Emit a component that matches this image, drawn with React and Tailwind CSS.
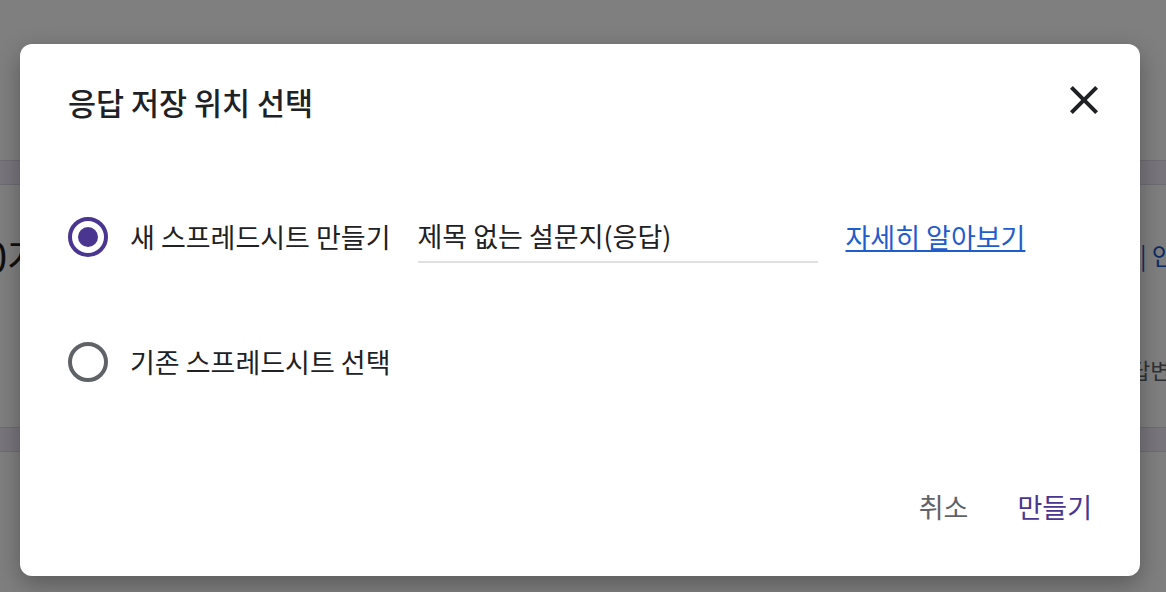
import { useState } from "react"

const CloseIcon = () => (
  <svg viewBox="0 0 24 24" className="h-12 w-12" fill="#202124">
    <path d="M19 6.41L17.59 5 12 10.59 6.41 5 5 6.41 10.59 12 5 17.59 6.41 19 12 13.41 17.59 19 19 17.59 13.41 12z" />
  </svg>
)

const Radio = ({ checked, label, onClick }) => (
  <button type="button" onClick={onClick} className="flex items-center gap-[22px] text-left">
    <span
      className={`flex h-10 w-10 shrink-0 items-center justify-center rounded-full border-4 ${
        checked ? "border-[#4a3590]" : "border-[#5f6368]"
      }`}
    >
      {checked && <span className="h-[20px] w-[20px] rounded-full bg-[#4a3590]"></span>}
    </span>
    <span className="whitespace-nowrap text-[27px] leading-9 text-[#202124]">{label}</span>
  </button>
)

const App = () => {
  const [choice, setChoice] = useState("new")
  const [title, setTitle] = useState("제목 없는 설문지(응답)")

  return (
    <div className="relative h-[592px] w-[1166px] overflow-hidden bg-white font-['Noto_Sans_CJK_KR','Noto_Sans',sans-serif]">
      {/* page behind the dialog */}
      <div className="flex flex-col">
        <div className="h-[160px] bg-white"></div>
        <div className="h-[25px] border-y border-[#dcd6e6] bg-[#f0ebf8]"></div>
        <div className="flex h-[242px] flex-col">
          <div className="mt-[46px] grid grid-cols-[1140px_1fr] items-center whitespace-nowrap">
            <span className="-ml-[15px] text-[40px] leading-[48px] text-[#202124]">0개</span>
            <span className="text-[24px] leading-8 text-[#1a56c8]">| 인쇄</span>
          </div>
          <div className="mt-[74px] grid grid-cols-[1130px_1fr] whitespace-nowrap">
            <span></span>
            <span className="text-[22px] leading-8 text-[#5f6368]">답변을</span>
          </div>
        </div>
        <div className="h-[25px] border-y border-[#dcd6e6] bg-[#f0ebf8]"></div>
        <div className="h-[140px] bg-white"></div>
      </div>

      {/* overlay + dialog */}
      <div className="absolute inset-0 bg-black/50 px-[20px] pt-[44px]">
        <div className="flex h-[532px] w-[1120px] flex-col rounded-[12px] bg-white shadow-[0_8px_24px_rgba(0,0,0,0.3)]">
          <div className="mt-[32px] flex h-12 items-center justify-between pl-12 pr-8">
            <h2 className="mt-[4px] text-[30.5px] font-medium leading-10 text-[#202124]">응답 저장 위치 선택</h2>
            <button type="button" className="flex h-12 w-12 items-center justify-center">
              <CloseIcon />
            </button>
          </div>

          <div className="mt-[87px] flex flex-col pl-12">
            <div className="flex items-center">
              <Radio checked={choice === "new"} label="새 스프레드시트 만들기" onClick={() => setChoice("new")} />
              <div className="ml-[27px] flex h-[52px] w-[400px] items-center border-b-2 border-[#e0e0e0]">
                <input
                  value={title}
                  onChange={(e) => setTitle(e.target.value)}
                  className="w-full bg-transparent text-[27px] leading-9 text-[#202124] outline-none"
                />
              </div>
              <a href="#" className="ml-[28px] whitespace-nowrap text-[27px] leading-9 text-[#1f5ccc] underline">
                자세히 알아보기
              </a>
            </div>
            <div className="mt-[79px] flex items-center">
              <Radio checked={choice === "existing"} label="기존 스프레드시트 선택" onClick={() => setChoice("existing")} />
            </div>
          </div>

          <div className="mt-auto mb-[49px] flex items-center justify-end gap-[33px] pr-[40px]">
            <button type="button" className="h-10 px-2 text-[27px] text-[#5f6368]">
              취소
            </button>
            <button type="button" className="h-10 px-2 text-[27px] text-[#4a3590]">
              만들기
            </button>
          </div>
        </div>
      </div>
    </div>
  )
}

export default App
